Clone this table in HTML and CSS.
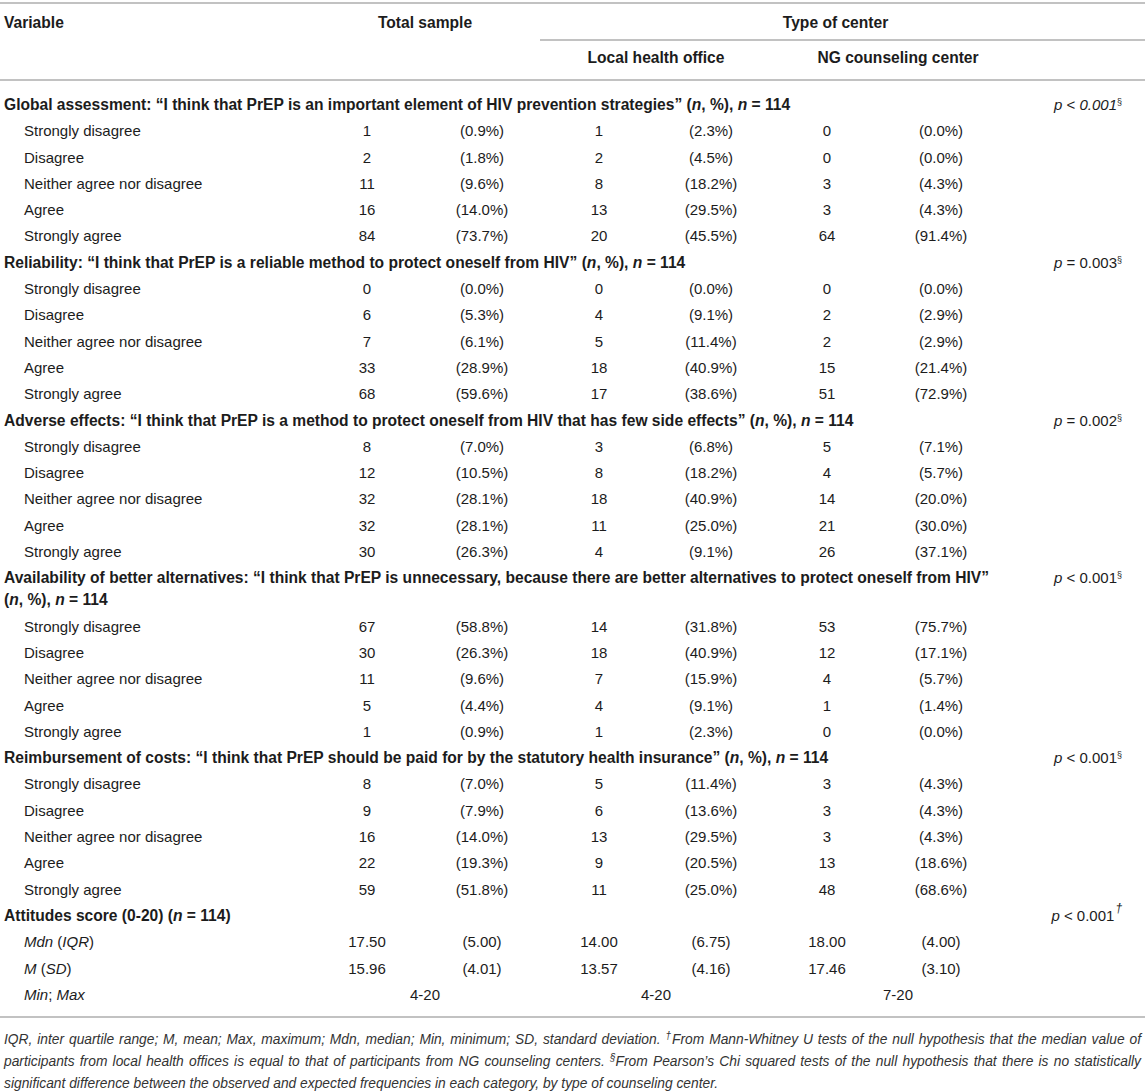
FILE: index.html
```html
<!DOCTYPE html>
<html lang="en">
<head>
<meta charset="utf-8">
<title>PrEP attitudes table</title>
<link rel="stylesheet" href="styles.css">
</head>
<body>
<table class="data">
  <colgroup>
    <col class="c-var"><col class="c-tn"><col class="c-tp"><col class="c-ln"><col class="c-lp"><col class="c-nn"><col class="c-np"><col class="c-p">
  </colgroup>
  <thead>
    <tr class="h1">
      <th rowspan="2" class="hvar">Variable</th>
      <th rowspan="2" colspan="2" class="htot">Total sample</th>
      <th colspan="5" class="htype">Type of center</th>
    </tr>
    <tr class="h2">
      <th colspan="2" class="hlocal">Local health office</th>
      <th colspan="2" class="hng">NG counseling center</th>
      <th class="hp"></th>
    </tr>
  </thead>
  <tbody>
    <tr class="sec first"><td colspan="8"><div class="secline"><span class="title">Global assessment: “I think that PrEP is an important element of HIV prevention strategies” (<i>n</i>, %), <i>n</i> = 114</span><span class="pv"><i>p</i> &lt; <i>0.001</i><sup class="s">§</sup></span></div></td></tr>
    <tr><td class="lab">Strongly disagree</td><td>1</td><td>(0.9%)</td><td>1</td><td>(2.3%)</td><td>0</td><td>(0.0%)</td><td></td></tr>
    <tr><td class="lab">Disagree</td><td>2</td><td>(1.8%)</td><td>2</td><td>(4.5%)</td><td>0</td><td>(0.0%)</td><td></td></tr>
    <tr><td class="lab">Neither agree nor disagree</td><td>11</td><td>(9.6%)</td><td>8</td><td>(18.2%)</td><td>3</td><td>(4.3%)</td><td></td></tr>
    <tr><td class="lab">Agree</td><td>16</td><td>(14.0%)</td><td>13</td><td>(29.5%)</td><td>3</td><td>(4.3%)</td><td></td></tr>
    <tr><td class="lab">Strongly agree</td><td>84</td><td>(73.7%)</td><td>20</td><td>(45.5%)</td><td>64</td><td>(91.4%)</td><td></td></tr>

    <tr class="sec"><td colspan="8"><div class="secline"><span class="title">Reliability: “I think that PrEP is a reliable method to protect oneself from HIV” (<i>n</i>, %), <i>n</i> = 114</span><span class="pv"><i>p</i> = 0.003<sup class="s">§</sup></span></div></td></tr>
    <tr><td class="lab">Strongly disagree</td><td>0</td><td>(0.0%)</td><td>0</td><td>(0.0%)</td><td>0</td><td>(0.0%)</td><td></td></tr>
    <tr><td class="lab">Disagree</td><td>6</td><td>(5.3%)</td><td>4</td><td>(9.1%)</td><td>2</td><td>(2.9%)</td><td></td></tr>
    <tr><td class="lab">Neither agree nor disagree</td><td>7</td><td>(6.1%)</td><td>5</td><td>(11.4%)</td><td>2</td><td>(2.9%)</td><td></td></tr>
    <tr><td class="lab">Agree</td><td>33</td><td>(28.9%)</td><td>18</td><td>(40.9%)</td><td>15</td><td>(21.4%)</td><td></td></tr>
    <tr><td class="lab">Strongly agree</td><td>68</td><td>(59.6%)</td><td>17</td><td>(38.6%)</td><td>51</td><td>(72.9%)</td><td></td></tr>

    <tr class="sec"><td colspan="8"><div class="secline"><span class="title">Adverse effects: “I think that PrEP is a method to protect oneself from HIV that has few side effects” (<i>n</i>, %), <i>n</i> = 114</span><span class="pv"><i>p</i> = 0.002<sup class="s">§</sup></span></div></td></tr>
    <tr><td class="lab">Strongly disagree</td><td>8</td><td>(7.0%)</td><td>3</td><td>(6.8%)</td><td>5</td><td>(7.1%)</td><td></td></tr>
    <tr><td class="lab">Disagree</td><td>12</td><td>(10.5%)</td><td>8</td><td>(18.2%)</td><td>4</td><td>(5.7%)</td><td></td></tr>
    <tr><td class="lab">Neither agree nor disagree</td><td>32</td><td>(28.1%)</td><td>18</td><td>(40.9%)</td><td>14</td><td>(20.0%)</td><td></td></tr>
    <tr><td class="lab">Agree</td><td>32</td><td>(28.1%)</td><td>11</td><td>(25.0%)</td><td>21</td><td>(30.0%)</td><td></td></tr>
    <tr><td class="lab">Strongly agree</td><td>30</td><td>(26.3%)</td><td>4</td><td>(9.1%)</td><td>26</td><td>(37.1%)</td><td></td></tr>

    <tr class="sec"><td colspan="8"><div class="secline"><span class="title">Availability of better alternatives: “I think that PrEP is unnecessary, because there are better alternatives to protect oneself from HIV”<br>(<i>n</i>, %), <i>n</i> = 114</span><span class="pv"><i>p</i> &lt; 0.001<sup class="s">§</sup></span></div></td></tr>
    <tr><td class="lab">Strongly disagree</td><td>67</td><td>(58.8%)</td><td>14</td><td>(31.8%)</td><td>53</td><td>(75.7%)</td><td></td></tr>
    <tr><td class="lab">Disagree</td><td>30</td><td>(26.3%)</td><td>18</td><td>(40.9%)</td><td>12</td><td>(17.1%)</td><td></td></tr>
    <tr><td class="lab">Neither agree nor disagree</td><td>11</td><td>(9.6%)</td><td>7</td><td>(15.9%)</td><td>4</td><td>(5.7%)</td><td></td></tr>
    <tr><td class="lab">Agree</td><td>5</td><td>(4.4%)</td><td>4</td><td>(9.1%)</td><td>1</td><td>(1.4%)</td><td></td></tr>
    <tr><td class="lab">Strongly agree</td><td>1</td><td>(0.9%)</td><td>1</td><td>(2.3%)</td><td>0</td><td>(0.0%)</td><td></td></tr>

    <tr class="sec"><td colspan="8"><div class="secline"><span class="title">Reimbursement of costs: “I think that PrEP should be paid for by the statutory health insurance” (<i>n</i>, %), <i>n</i> = 114</span><span class="pv"><i>p</i> &lt; 0.001<sup class="s">§</sup></span></div></td></tr>
    <tr><td class="lab">Strongly disagree</td><td>8</td><td>(7.0%)</td><td>5</td><td>(11.4%)</td><td>3</td><td>(4.3%)</td><td></td></tr>
    <tr><td class="lab">Disagree</td><td>9</td><td>(7.9%)</td><td>6</td><td>(13.6%)</td><td>3</td><td>(4.3%)</td><td></td></tr>
    <tr><td class="lab">Neither agree nor disagree</td><td>16</td><td>(14.0%)</td><td>13</td><td>(29.5%)</td><td>3</td><td>(4.3%)</td><td></td></tr>
    <tr><td class="lab">Agree</td><td>22</td><td>(19.3%)</td><td>9</td><td>(20.5%)</td><td>13</td><td>(18.6%)</td><td></td></tr>
    <tr><td class="lab">Strongly agree</td><td>59</td><td>(51.8%)</td><td>11</td><td>(25.0%)</td><td>48</td><td>(68.6%)</td><td></td></tr>

    <tr class="sec"><td colspan="8"><div class="secline"><span class="title">Attitudes score (0-20) (<i>n</i> = 114)</span><span class="pv"><i>p</i> &lt; 0.001<sup class="dag">†</sup></span></div></td></tr>
    <tr><td class="lab"><i>Mdn</i> (<i>IQR</i>)</td><td>17.50</td><td>(5.00)</td><td>14.00</td><td>(6.75)</td><td>18.00</td><td>(4.00)</td><td></td></tr>
    <tr><td class="lab"><i>M</i> (<i>SD</i>)</td><td>15.96</td><td>(4.01)</td><td>13.57</td><td>(4.16)</td><td>17.46</td><td>(3.10)</td><td></td></tr>
    <tr class="last"><td class="lab"><i>Min</i>; <i>Max</i></td><td colspan="2">4-20</td><td colspan="2" class="mm-local">4-20</td><td colspan="2" class="mm-ng">7-20</td><td></td></tr>
  </tbody>
</table>
<p class="note">IQR, inter quartile range; M, mean; Max, maximum; Mdn, median; Min, minimum; SD, standard deviation. <sup class="ns">†</sup>From Mann-Whitney U tests of the null hypothesis that the median value of participants from local health offices is equal to that of participants from NG counseling centers. <sup class="ns">§</sup>From Pearson’s Chi squared tests of the null hypothesis that there is no statistically significant difference between the observed and expected frequencies in each category, by type of counseling center.</p>
</body>
</html>
```

FILE: styles.css
```css
html, body {
  margin: 0;
  padding: 0;
  background: #ffffff;
}

body {
  font-family: "Liberation Sans", Arial, Helvetica, sans-serif;
  color: #1c1c1c;
}

.data {
  width: 1145px;
  table-layout: fixed;
  border-collapse: collapse;
  margin-top: 2px;
  font-size: 15px;
  line-height: 22px;
}

.c-var { width: 310px; }
.c-tn { width: 114px; }
.c-tp { width: 116px; }
.c-ln { width: 118px; }
.c-lp { width: 106px; }
.c-nn { width: 126px; }
.c-np { width: 102px; }
.c-p { width: 153px; }

.data thead {
  border-top: 2px solid #c2c2c2;
}

.data th {
  font-weight: bold;
  font-size: 15.6px;
  padding: 0;
  vertical-align: top;
  text-align: center;
}

.h1 th {
  padding-top: 8px;
  padding-bottom: 5px;
}

.hvar,
.htot {
  border-bottom: 2px solid #c2c2c2;
}

.hvar {
  text-align: left !important;
  padding-left: 4px !important;
}

.htype {
  border-bottom: 2px solid #c2c2c2;
  padding-right: 14px !important;
}

.h2 th {
  padding-top: 6px;
  padding-bottom: 10px;
  border-bottom: 2px solid #c2c2c2;
}

.hlocal {
  padding-left: 8px !important;
}

.hng {
  padding-left: 40px !important;
}

.data td {
  padding: 2px 0 2.3px;
  text-align: center;
  vertical-align: top;
}

.secline {
  display: flex;
  justify-content: space-between;
  align-items: flex-start;
  gap: 24px;
  padding-left: 4px;
  padding-right: 23px;
}

.title {
  text-align: left;
  font-weight: bold;
  font-size: 15.6px;
}

.pv {
  flex: none;
  white-space: nowrap;
}

.data tr.first td {
  padding-top: 13px;
}

.data td.lab {
  text-align: left;
  padding-left: 24px;
}

.s {
  font-size: 9px;
  line-height: 0;
  vertical-align: 5px;
}

.dag {
  font-size: 12px;
  font-style: italic;
  line-height: 0;
  vertical-align: 9px;
  margin-left: 1px;
}

.mm-local {
  padding-left: 8px !important;
}

.mm-ng {
  padding-left: 40px !important;
}

.data tr.last td {
  padding-bottom: 10px;
}

.data tbody {
  border-bottom: 2px solid #c2c2c2;
}

.note {
  margin: 0;
  padding: 11px 4px 0 4px;
  font-size: 13.8px;
  line-height: 22px;
  font-style: italic;
  color: #333333;
  text-align: justify;
}

.ns {
  font-size: 10px;
  line-height: 0;
  vertical-align: 5px;
}
```
